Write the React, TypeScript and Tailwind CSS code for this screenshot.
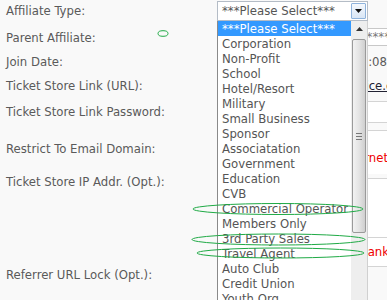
const FONT = "font-['DejaVu_Sans_Condensed','Liberation_Sans',sans-serif]";

const OPTIONS = [
  "***Please Select***",
  "Corporation",
  "Non-Profit",
  "School",
  "Hotel/Resort",
  "Military",
  "Small Business",
  "Sponsor",
  "Associatation",
  "Government",
  "Education",
  "CVB",
  "Commercial Operator",
  "Members Only",
  "3rd Party Sales",
  "Travel Agent",
  "Auto Club",
  "Credit Union",
  "Youth Org.",
];

function Label({ text, h, pt }: { text: string; h: number; pt: number }) {
  return (
    <div className="w-[217px] shrink-0 whitespace-nowrap pl-[6px] leading-[16px]" style={{ height: h, paddingTop: pt }}>
      {text}
    </div>
  );
}

function AffiliateSelect() {
  return (
    <div className="mt-[1px] flex h-[20px] w-[151px] items-center border border-[#b4bcc6] bg-white">
      <span className="flex-1 whitespace-nowrap pl-[4px] leading-[16px] text-[#555]">***Please Select***</span>
      <div className="mr-[1px] flex h-[16px] w-[15px] items-center justify-center rounded-[1px] border border-[#8fb3dc] bg-gradient-to-b from-[#f4f8fd] to-[#d9e6f5]">
        <svg width="7" height="4" viewBox="0 0 7 4">
          <path d="M0 0h7L3.5 4z" fill="#111" />
        </svg>
      </div>
    </div>
  );
}

function DropdownList() {
  return (
    <div className="absolute left-[217px] top-[21px] flex h-[290px] w-[151px] border-l border-[#8a8a8a] bg-white">
      <ul className="flex-1">
        {OPTIONS.map((o, i) => (
          <li
            key={o}
            className={
              "h-[15px] whitespace-nowrap pl-[4px] leading-[15px] " +
              (i === 0 ? "bg-[#3399ff] text-white" : "text-[#555]")
            }
          >
            {o}
          </li>
        ))}
      </ul>
      <div className="flex w-[16px] flex-col bg-[#eeeeee] px-[1px]">
        <div className="flex h-[16px] items-center justify-center">
          <svg width="7" height="4" viewBox="0 0 7 4">
            <path d="M3.5 0L7 4H0z" fill="#333" />
          </svg>
        </div>
        <div className="mt-[2px] flex h-[194px] flex-col items-center justify-center gap-[2px] rounded-[2px] border border-[#9a9a9a] bg-gradient-to-r from-[#f2f2f2] via-[#e4e4e4] to-[#cfcfcf]">
          <div className="h-px w-[6px] bg-[#777]" />
          <div className="h-px w-[6px] bg-[#777]" />
          <div className="h-px w-[6px] bg-[#777]" />
        </div>
      </div>
      <div className="w-px bg-[#d0d0d0]" />
    </div>
  );
}

function Marks() {
  return (
    <svg className="pointer-events-none absolute left-0 top-0" width="387" height="300">
      <g fill="none" stroke="#1faa45" strokeWidth="1">
        <ellipse cx="163" cy="33.5" rx="5" ry="2.8" />
        <ellipse cx="278" cy="209" rx="85" ry="5.5" />
        <ellipse cx="278.5" cy="239.5" rx="86.5" ry="5.5" />
        <ellipse cx="280.5" cy="253" rx="83.5" ry="5" />
      </g>
    </svg>
  );
}

export default function App() {
  return (
    <div className={`relative h-[300px] w-[387px] overflow-hidden bg-[#f9f9f9] text-[13px] text-[#5a5a5a] ${FONT}`}>
      <div className="flex flex-col">
        <div className="flex">
          <Label text="Affiliate Type:" h={22} pt={3} />
          <AffiliateSelect />
        </div>
        <div className="flex">
          <Label text="Parent Affiliate:" h={31} pt={8} />
          <div className="mt-[6px] h-[18px] w-[180px] shrink-0 whitespace-nowrap border border-[#c8c8c8] bg-white pr-[6px] text-right leading-[16px] text-[#777]">
            ***Please Select*****
          </div>
        </div>
        <div className="flex">
          <Label text="Join Date:" h={18} pt={1} />
          <div className="w-[170px] shrink-0 whitespace-nowrap pt-[1px] text-right leading-[16px]">3/14/2012 10:42:08</div>
        </div>
        <div className="flex">
          <Label text="Ticket Store Link (URL):" h={30} pt={7} />
          <div className="w-[194px] shrink-0 whitespace-nowrap pt-[7px] text-right leading-[16px]">
            <span className="text-[#223] underline">http://www.service.com</span>
          </div>
        </div>
        <div className="flex">
          <Label text="Ticket Store Link Password:" h={22} pt={3} />
          <div className="h-[22px] w-[200px] shrink-0 border border-[#d4d4d4] bg-white" />
        </div>
        <div className="flex">
          <Label text="Restrict To Email Domain:" h={51} pt={18} />
          <div className="mt-[7px] h-[44px] w-[200px] shrink-0 whitespace-nowrap border-t border-[#d4d4d4] bg-white pr-[29px] pt-[19px] text-right leading-[16px] text-[#e00]">
            internet
          </div>
        </div>
        <div className="flex">
          <Label text="Ticket Store IP Addr. (Opt.):" h={93} pt={0} />
          <div className="mt-[4px] flex w-[200px] shrink-0 flex-col">
            <div className="h-[59px] border-t border-[#d4d4d4] bg-white" />
            <div className="h-[30px] whitespace-nowrap border-y border-[#d4d4d4] bg-white pr-[28px] pt-[6px] text-right leading-[16px] text-[#e00]">
              blank
            </div>
          </div>
        </div>
        <div className="flex">
          <Label text="Referrer URL Lock (Opt.):" h={24} pt={0} />
        </div>
      </div>

      <div className="absolute left-[367px] top-[85px] h-[215px] w-px bg-black" />
      <DropdownList />
      <Marks />
    </div>
  );
}
